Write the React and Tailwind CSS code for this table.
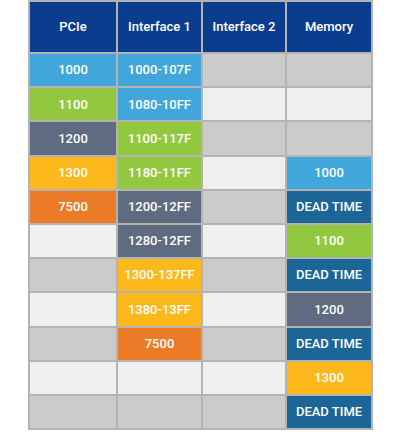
const C = {
  blue: 'bg-[#41a6d9]',
  green: 'bg-[#92c840]',
  slate: 'bg-[#5f6b80]',
  yellow: 'bg-[#fdb81c]',
  orange: 'bg-[#eb7b26]',
  teal: 'bg-[#1b6597]',
};

// [text, color] per cell; null = empty (striped gray)
const rows = [
  [['1000', C.blue], ['1000-107F', C.blue], null, null],
  [['1100', C.green], ['1080-10FF', C.blue], null, null],
  [['1200', C.slate], ['1100-117F', C.green], null, null],
  [['1300', C.yellow], ['1180-11FF', C.green], null, ['1000', C.blue]],
  [['7500', C.orange], ['1200-12FF', C.slate], null, ['DEAD TIME', C.teal]],
  [null, ['1280-12FF', C.slate], null, ['1100', C.green]],
  [null, ['1300-137FF', C.yellow], null, ['DEAD TIME', C.teal]],
  [null, ['1380-13FF', C.yellow], null, ['1200', C.slate]],
  [null, ['7500', C.orange], null, ['DEAD TIME', C.teal]],
  [null, null, null, ['1300', C.yellow]],
  [null, null, null, ['DEAD TIME', C.teal]],
];

const headers = ['PCIe', 'Interface 1', 'Interface 2', 'Memory'];

export default function App() {
  return (
    <div className="w-[400px] h-[432px] bg-white pl-[28px] overflow-hidden" style={{ fontFamily: 'Roboto, "Liberation Sans", sans-serif' }}>
      <div className="grid grid-cols-[86px_83px_82px_84px] gap-[2px] p-[2px] bg-[#b3b3b3] w-[345px]">
        {headers.map((h) => (
          <div key={h} className="h-[50px] bg-[#0b3d8e] text-white text-[13px] font-medium flex items-center justify-center">
            {h}
          </div>
        ))}
        {rows.map((row, i) =>
          row.map((cell, j) => (
            <div
              key={i + '-' + j}
              className={`h-[32.2px] flex items-center justify-center text-white text-[13px] font-medium ${
                cell ? cell[1] : i % 2 === 0 ? 'bg-[#cbcbcb]' : 'bg-[#efefef]'
              }`}
            >
              {cell ? cell[0] : ''}
            </div>
          ))
        )}
      </div>
    </div>
  );
}
